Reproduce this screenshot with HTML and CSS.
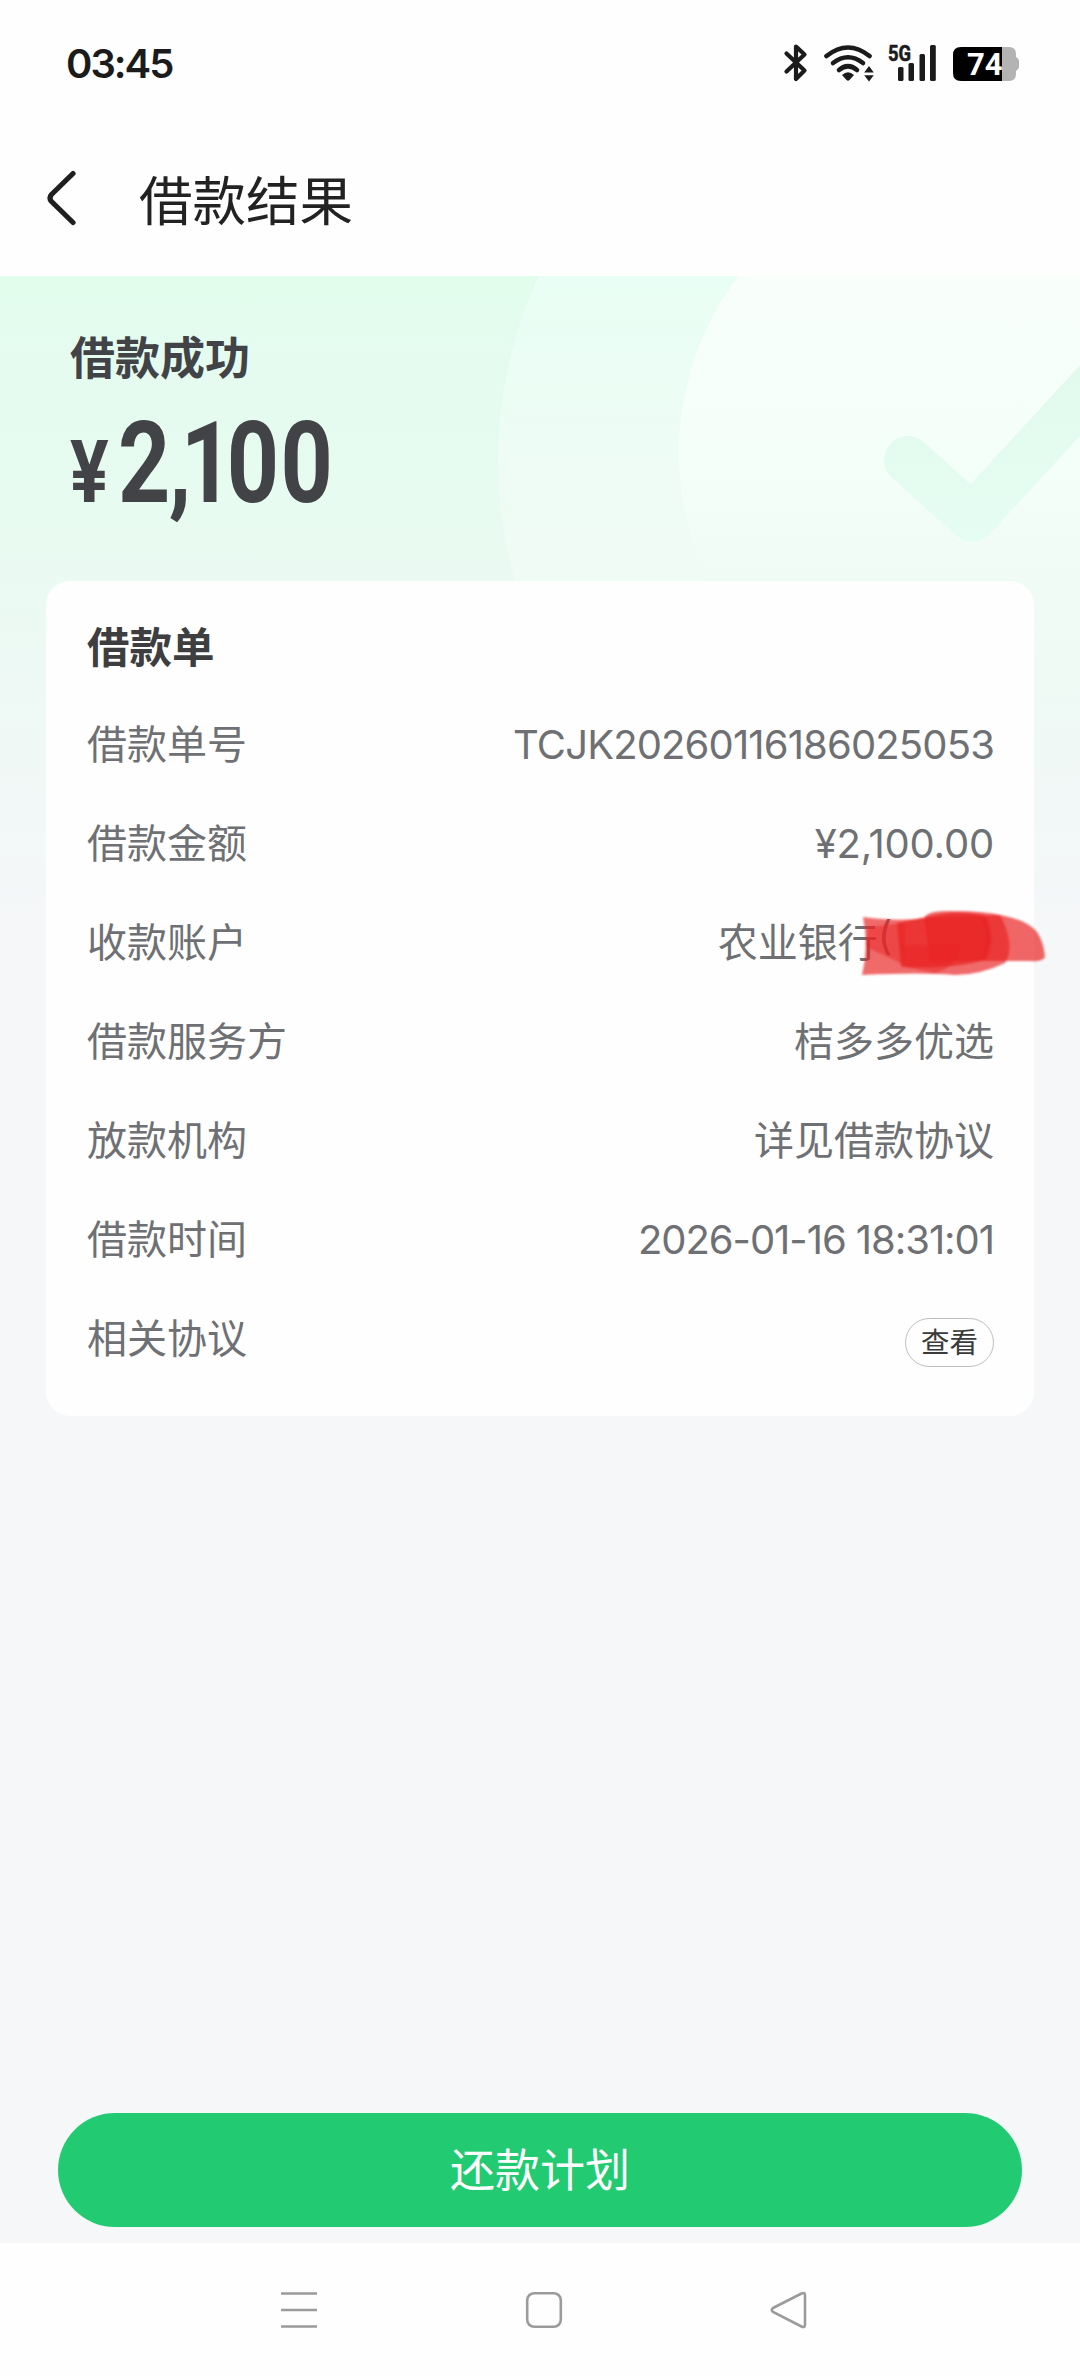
FILE: index.html
```html
<!DOCTYPE html>
<html lang="zh-CN">
<head>
    <meta charset="UTF-8">
    <meta name="viewport" content="width=device-width, initial-scale=1.0">
    <title>借款结果</title>
    <link rel="stylesheet" href="styles.css">
</head>
<body>
  <div class="status">
    <span class="time">03:45</span>
    <svg class="status-icons" width="240" height="50" viewBox="779 39 240 50">
      <!-- bluetooth -->
      <path d="M785.500 54.500L803.500 71.500L795 80V47.500L803.500 55.500L785.500 72.500" fill="none" stroke="#1b1b1b" stroke-width="4.200" stroke-linejoin="round" stroke-linecap="round"/>
      <!-- wifi -->
      <g fill="none" stroke="#1b1b1b" stroke-width="4.600" stroke-linecap="round">
        <path d="M825.500 57Q847 40 868.500 57"/>
        <path d="M832 64Q847 52.500 862 64"/>
        <path d="M838 71Q847 63.500 856 71"/>
      </g>
      <path d="M841 76Q847 70.500 853 76L848.500 81Q847 82.500 845.500 81Z" fill="#1b1b1b"/>
      <path d="M868 68.500L872.800 75H863.200ZM868 84L872.800 77.800H863.200Z" transform="translate(0 -1.500)" fill="#1b1b1b"/>
      <!-- signal -->
      <text class="net" x="887" y="61.500" textLength="23" lengthAdjust="spacingAndGlyphs">5G</text>
      <g fill="#1b1b1b">
        <rect x="897" y="68" width="5.500" height="14" rx="1.500"/>
        <rect x="907.500" y="64" width="5.500" height="18" rx="1.500"/>
        <rect x="918.500" y="55" width="5.500" height="27" rx="1.500"/>
        <rect x="929" y="46" width="5.800" height="36" rx="1.500"/>
      </g>
      <!-- battery -->
      <path d="M1001 48H1008Q1015 48 1015 55V58Q1018 59.500 1018 62V68Q1018 70.500 1015 72V75Q1015 82 1008 82H1001Z" fill="#b3b3b3"/>
      <path d="M1001 48H960Q952 48 952 56V74Q952 82 960 82H1001Z" fill="#000"/>
      <text class="bat" x="966" y="76">74</text>
    </svg>
  </div>

  <div class="topbar">
    <svg class="back" width="32" height="60" viewBox="0 0 32 60">
      <path d="M27 5.500L5.500 26.500Q2.500 30 5.500 33.500L27 54.500" fill="none" stroke="#1f1f1f" stroke-width="5.200" stroke-linecap="round" stroke-linejoin="round"/>
    </svg>
    <h1>借款结果</h1>
  </div>

  <div class="main">
    <svg class="deco" width="1080" height="724" viewBox="0 276 1080 724">
      <defs>
        <linearGradient id="ring" x1="0" y1="276" x2="0" y2="720" gradientUnits="userSpaceOnUse">
          <stop offset="0" stop-color="#e9fef4"/>
          <stop offset=".65" stop-color="#f0fbf5"/>
          <stop offset="1" stop-color="#f0fbf5" stop-opacity="0"/>
        </linearGradient>
        <linearGradient id="disc" x1="0" y1="276" x2="0" y2="720" gradientUnits="userSpaceOnUse">
          <stop offset="0" stop-color="#f8fffb"/>
          <stop offset=".4" stop-color="#f5fffa"/>
          <stop offset=".68" stop-color="#f1fbf6"/>
          <stop offset="1" stop-color="#f1fbf6" stop-opacity="0"/>
        </linearGradient>
        <linearGradient id="tick" x1="0" y1="370" x2="0" y2="540" gradientUnits="userSpaceOnUse">
          <stop offset="0" stop-color="#e2f9ee"/>
          <stop offset="1" stop-color="#e6fdf3"/>
        </linearGradient>
      </defs>
      <circle cx="936" cy="460" r="438" fill="url(#ring)"/>
      <circle cx="972" cy="453" r="293" fill="url(#disc)"/>
      <path d="M908 460L972 518L1110 368" fill="none" stroke="url(#tick)" stroke-width="48" stroke-linecap="round" stroke-linejoin="round"/>
    </svg>

    <div class="hero">
      <h2>借款成功</h2>
      <div class="amount"><span class="yen">¥</span><span class="num">2<span class="comma">,</span><span class="one">1</span>00</span></div>
    </div>

    <div class="card">
      <h3>借款单</h3>
      <div class="row"><span>借款单号</span><span class="num-id">TCJK20260116186025053</span></div>
      <div class="row"><span>借款金额</span><span class="num-money">¥2,100.00</span></div>
      <div class="row bank"><span>收款账户</span><span class="acct">农业银行<span class="paren">(</span><span class="paren">)</span></span>
        <!-- marker strokes over the account number -->
        <svg class="marker" width="200" height="84" viewBox="855 900 200 84">
          <g fill="#e92424">
            <path d="M863 916Q900 921 926 917L1000 914Q1016 945 1005 962Q980 974 955 974Q920 971 862 974Q869 945 863 916Z" opacity=".68"/>
            <path d="M924 917Q928 909 952 910Q985 910 1005 915Q1028 920 1037 931Q1044 942 1045 956Q1043 961 1030 960L930 960Z" opacity=".7"/>
            <path d="M897 922L926 916Q960 908 986 915Q997 940 986 958Q960 968 901 966Z" opacity=".75"/>
            <path d="M868 926L905 922V964L866 946Z" opacity=".5"/>
            <path d="M900 944H960Q958 966 935 972L905 966Z" opacity=".5"/>
          </g>
        </svg>
      </div>
      <div class="row"><span>借款服务方</span><span>桔多多优选</span></div>
      <div class="row"><span>放款机构</span><span>详见借款协议</span></div>
      <div class="row"><span>借款时间</span><span class="num-date">2026-01-16 18:31:01</span></div>
      <div class="row"><span>相关协议</span><button class="view">查看</button></div>
    </div>

    <button class="plan">还款计划</button>
  </div>

  <div class="sysnav">
    <svg width="40" height="40" viewBox="0 0 40 40"><path d="M2 3.500H38M2 20H38M2 36.500H38"/></svg>
    <svg width="40" height="40" viewBox="0 0 40 40"><rect x="3.200" y="3.200" width="33.600" height="33.600" rx="7"/></svg>
    <svg width="40" height="40" viewBox="0 0 40 40"><path d="M4 18L32.500 3.500Q36 2 36 5.500V34.500Q36 38 32.500 36.500L4 22Q1.500 20 4 18Z"/></svg>
  </div>
</body>
</html>
```

FILE: styles.css
```css
*{
  margin: 0;
  padding: 0;
  box-sizing: border-box;
}
body {
  width: 1080px;
  height: 2376px;
  display: flex;
  flex-direction: column;
  background-color: #fefefe;
  font-family: "Inter", "Noto Sans CJK SC", sans-serif;
  overflow: hidden;
}
.status {
  height: 126px;
  padding: 0 60px 0 66px;
  display: flex;
  justify-content: space-between;
  align-items: center;
}
.time {
  font-size: 40px;
  font-weight: 600;
  letter-spacing: -2px;
  color: #1b1b1b;
}
.net {
  font-family: "Roboto", sans-serif;
  font-size: 22px;
  font-weight: 700;
  fill: #1b1b1b;
  stroke: #1b1b1b;
  stroke-width: .6;
}
.bat {
  font-family: "Roboto", sans-serif;
  font-size: 31px;
  font-weight: 700;
  fill: white;
}
.topbar {
  height: 150px;
  padding: 0 0 6px 46px;
  display: flex;
  align-items: center;
}
h1 {
  margin-left: 61px;
  padding-bottom: 2px;
  font-size: 53.5px;
  font-weight: 400;
  color: #222;
}
.main {
  position: relative;
  flex: 1;
  display: flex;
  flex-direction: column;
  background: #f5f7f9 linear-gradient(#e1fdeb 0, #e5fbf0 80px, #e7fbf0 220px, #ebfaf3 310px, #f5f7f9 640px);
}
.deco {
  position: absolute;
  top: 0;
  left: 0;
}
.hero {
  position: relative;
  height: 305px;
  padding: 49px 0 0 70px;
  color: #414346;
}
h2 {
  font-size: 45px;
  line-height: 68px;
  font-weight: 600;
}
.amount {
  display: flex;
  align-items: baseline;
  margin-top: 1px;
  font-family: "Roboto", sans-serif;
  font-weight: 700;
  line-height: 138px;
}
.yen {
  width: 48px;
  font-size: 88px;
  transform: scaleX(.82);
  transform-origin: left;
}
.num {
  font-size: 114px;
  letter-spacing: 2px;
  transform: scaleX(.8);
  transform-origin: left;
}
.comma {
  margin-left: -4px;
  letter-spacing: -13px;
}
.one {
  letter-spacing: -8px;
}
.card {
  position: relative;
  width: 988px;
  height: 835px;
  margin: 0 auto;
  padding: 35px 40px 0 41px;
  border-radius: 24px;
  background-color: #fefefe;
}
h3 {
  font-size: 42.5px;
  line-height: 64px;
  margin-bottom: 15px;
  color: #3e3e40;
}
.row {
  position: relative;
  height: 99px;
  padding-bottom: 5px;
  display: flex;
  justify-content: space-between;
  align-items: center;
  font-size: 40px;
  color: #6f7074;
}
.num-id,
.num-money,
.num-date {
  padding-top: 5px;
}
.num-id {
  letter-spacing: -.86px;
}
.num-money {
  letter-spacing: -.2px;
}
.num-date {
  letter-spacing: -1.05px;
}
.acct {
  display: flex;
}
.paren:last-child {
  margin-left: 87px;
}
.marker {
  position: absolute;
  left: 768px;
  top: 8px;
  filter: blur(1px);
}
.view {
  width: 89px;
  height: 49px;
  margin-top: 13px;
  padding-bottom: 4px;
  border: 1px solid #bdbdbd;
  border-radius: 25px;
  background-color: transparent;
  font-family: inherit;
  font-size: 28.5px;
  color: #3a3a3a;
}
.plan {
  position: relative;
  width: 964px;
  height: 114px;
  margin: auto auto 16px;
  padding-bottom: 5px;
  border: none;
  border-radius: 57px;
  background-color: #22cb72;
  font-family: inherit;
  font-size: 45px;
  color: #fefefe;
}
.sysnav {
  height: 133px;
  padding: 0 271px 0 279px;
  display: flex;
  justify-content: space-between;
  align-items: center;
}
.sysnav svg {
  fill: none;
  stroke: #9b9b9b;
  stroke-width: 2.6;
}
```
